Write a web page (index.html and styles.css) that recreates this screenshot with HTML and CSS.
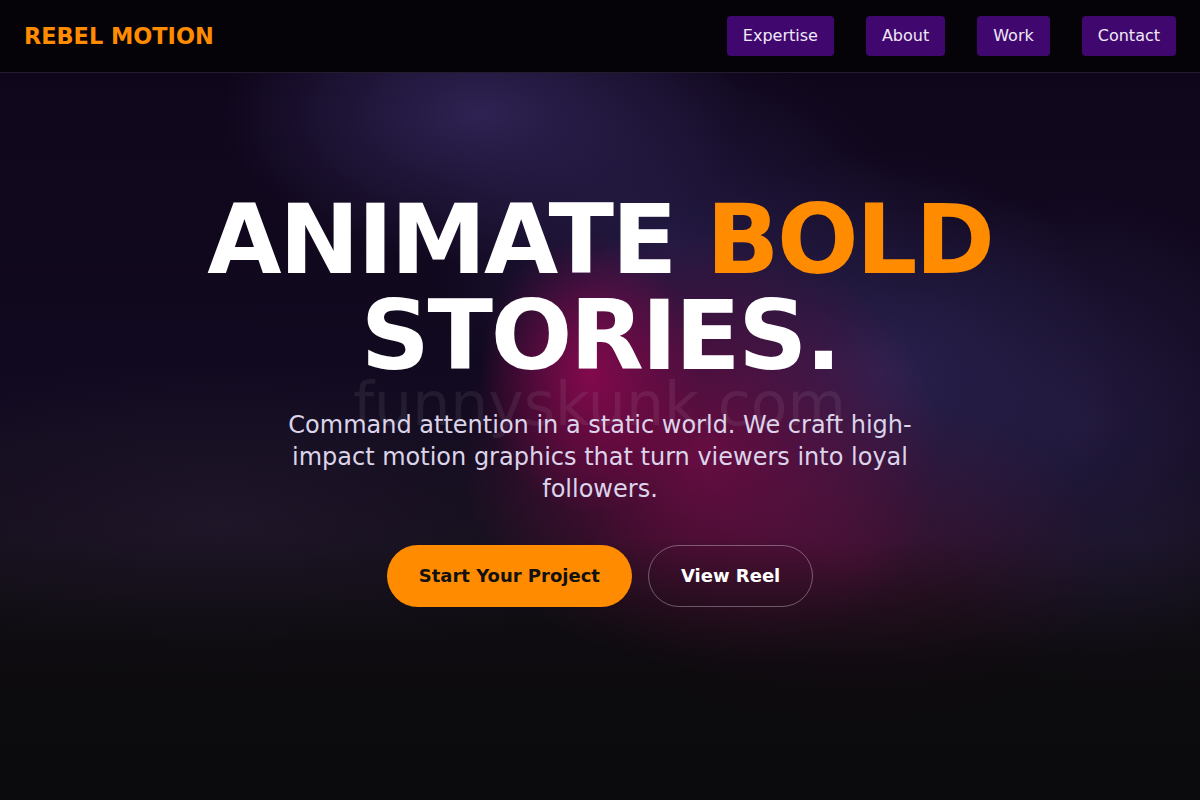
FILE: index.html
```html
<!DOCTYPE html>
<html lang="en">
<head>
<meta charset="utf-8">
<title>Rebel Motion</title>
<link rel="stylesheet" href="styles.css">
</head>
<body>
<header class="nav">
  <a class="logo" href="#">REBEL MOTION</a>
  <nav class="nav-links">
    <a class="nav-link" href="#">Expertise</a>
    <a class="nav-link" href="#">About</a>
    <a class="nav-link" href="#">Work</a>
    <a class="nav-link" href="#">Contact</a>
  </nav>
</header>
<main class="hero">
  <span class="watermark">funnyskunk.com</span>
  <h1 class="hero-title">ANIMATE <span class="accent">BOLD</span><br>STORIES.</h1>
  <p class="hero-sub">Command attention in a static world. We craft high-impact motion graphics that turn viewers into loyal followers.</p>
  <div class="hero-actions">
    <a class="btn btn-primary" href="#">Start Your Project</a>
    <a class="btn btn-ghost" href="#">View Reel</a>
  </div>
</main>
</body>
</html>
```
FILE: styles.css
```css
* { box-sizing: border-box; }
html, body { margin: 0; padding: 0; }
body {
  font-family: "DejaVu Sans", sans-serif;
  background: #0b0a0c;
  color: #fff;
  height: 800px;
  overflow: hidden;
}
a { text-decoration: none; }

.nav {
  height: 73px;
  display: flex;
  align-items: center;
  justify-content: space-between;
  padding: 0 24px;
  background: #050308;
  border-bottom: 1px solid #241c2c;
}
.logo {
  font-family: "DejaVu Sans", sans-serif;
  font-weight: 700;
  font-size: 22.4px;
  color: #ff8c00;
  margin-top: -1px;
}
.nav-links {
  display: flex;
  gap: 32px;
}
.nav-link {
  display: block;
  background: #40086e;
  color: #f1e8f8;
  font-size: 16px;
  line-height: 20px;
  padding: 10px 16px;
  border-radius: 4px;
}

.hero {
  position: relative;
  height: 727px;
  display: flex;
  flex-direction: column;
  align-items: center;
  padding-top: 119px;
  text-align: center;
  background:
    linear-gradient(180deg, rgba(11,10,12,0) 0%, rgba(11,10,12,0) 64%, rgba(11,10,12,0.8) 84%, #0b0a0c 100%),
    radial-gradient(ellipse 110px 140px at 590px 300px, rgba(155,8,85,0.75), rgba(155,8,85,0) 100%),
    radial-gradient(ellipse 240px 220px at 700px 380px, rgba(122,12,72,0.8), rgba(122,12,72,0) 100%),
    radial-gradient(ellipse 260px 170px at 850px 490px, rgba(85,18,60,0.6), rgba(85,18,60,0) 100%),
    radial-gradient(ellipse 260px 150px at 480px 40px, rgba(48,36,86,0.95), rgba(48,36,86,0) 100%),
    radial-gradient(ellipse 240px 200px at 670px 170px, rgba(40,30,76,0.8), rgba(40,30,76,0) 100%),
    radial-gradient(ellipse 240px 220px at 880px 300px, rgba(44,36,84,0.9), rgba(44,36,84,0) 100%),
    radial-gradient(ellipse 220px 240px at 1080px 350px, rgba(36,27,66,0.85), rgba(36,27,66,0) 100%),
    radial-gradient(ellipse 200px 120px at 1120px 510px, rgba(30,22,40,0.7), rgba(30,22,40,0) 100%),
    radial-gradient(ellipse 420px 160px at 220px 450px, rgba(34,24,44,0.75), rgba(34,24,44,0) 100%),
    linear-gradient(180deg, #0f061b 0%, #120a20 45%, #141019 72%, #0b0a0c 100%);
}
.watermark {
  position: absolute;
  left: 353px;
  top: 296px;
  font-size: 60px;
  line-height: 70px;
  color: rgba(255,255,255,0.07);
  white-space: nowrap;
  pointer-events: none;
}
.hero-title {
  position: relative;
  margin: 0;
  font-size: 96px;
  line-height: 96px;
  font-weight: 700;
  letter-spacing: -2.3px;
  color: #fff;
}
.accent { color: #ff8c00; }
.hero-sub {
  position: relative;
  margin: 25px 0 0;
  max-width: 650px;
  font-size: 24px;
  line-height: 32px;
  color: #dcd4ea;
}
.hero-actions {
  position: relative;
  display: flex;
  gap: 16px;
  margin-top: 40px;
}
.btn {
  display: block;
  font-size: 18px;
  font-weight: 700;
  line-height: 20px;
  padding: 20px 32px;
  border-radius: 31px;
  border: 1px solid transparent;
}
.btn-primary {
  background: #ff8c00;
  color: #111;
  padding: 20px 31px;
}
.btn-ghost {
  border-color: rgba(255,255,255,0.32);
  color: #fff;
  background: transparent;
}
```
